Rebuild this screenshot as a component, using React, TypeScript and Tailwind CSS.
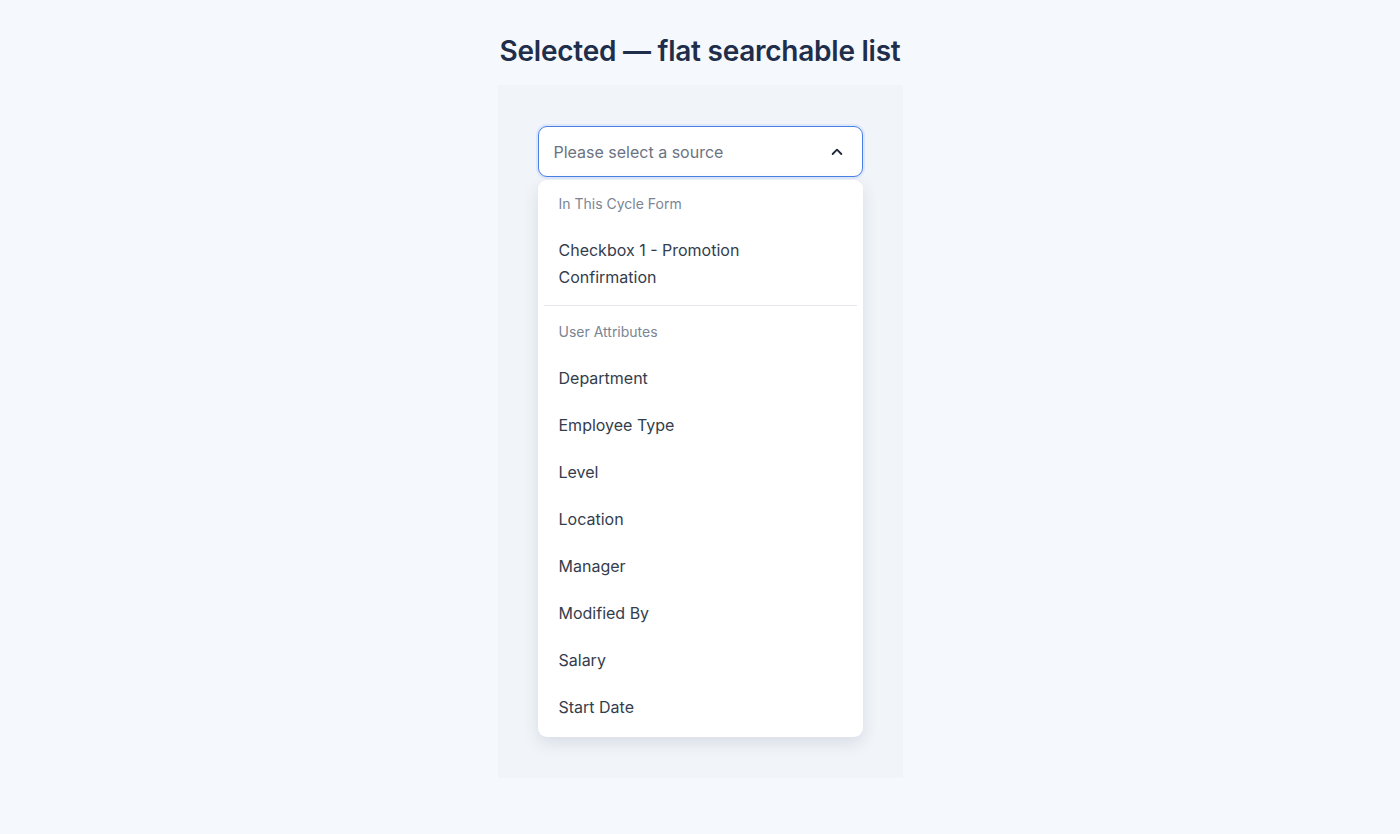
import React from "react";

const items = [
  "Department",
  "Employee Type",
  "Level",
  "Location",
  "Manager",
  "Modified By",
  "Salary",
  "Start Date",
];

export default function App() {
  return (
    <div
      className="min-h-[834px] w-full bg-[#f5f8fc] flex flex-col items-center pt-[33px]"
      style={{ fontFamily: "Inter, 'Noto Sans', sans-serif" }}
    >
      <h1 className="text-[28px] leading-[36px] font-semibold text-[#1f2f4b] tracking-[-0.25px] mb-[16px]">
        Selected — flat searchable list
      </h1>
      <div className="w-[405px] bg-[#f1f5f9] p-10 pb-[41px] flex flex-col">
        <div className="h-[51px] mt-[1px] rounded-[9px] border-[1.5px] border-[#4a80e4] bg-white ring-2 ring-[#dde8fb] flex items-center justify-between pl-[15px] pr-[17px]">
          <span className="text-[16px] text-[#6b7383]">Please select a source</span>
          <svg width="16" height="16" viewBox="0 0 24 24" fill="none" stroke="#1f2937" strokeWidth="2.8" strokeLinecap="round" strokeLinejoin="round">
            <path d="M5.5 15l6.5-6.5 6.5 6.5" />
          </svg>
        </div>
        <div className="mt-[3px] bg-white rounded-[9px] shadow-[0_6px_16px_rgba(30,50,80,0.12)] pt-[4px] pb-[6px]">
          <div className="px-[21px] pt-[10px] pb-[13px] text-[14px] leading-[20px] text-[#7b8594]">
            In This Cycle Form
          </div>
          <div className="px-[21px] py-[10px] text-[16px] leading-[27px] text-[#333d4d] w-[305px]">
            Checkbox 1 - Promotion Confirmation
          </div>
          <div className="mx-[6px] mt-[4px] h-px bg-[#e5e9ef]" />
          <div className="px-[21px] pt-[16px] pb-[13px] text-[14px] leading-[20px] text-[#7b8594]">
            User Attributes
          </div>
          {items.map((it) => (
            <div key={it} className="px-[21px] py-[10px] text-[16px] leading-[27px] text-[#333d4d]">
              {it}
            </div>
          ))}
        </div>
      </div>
    </div>
  );
}
